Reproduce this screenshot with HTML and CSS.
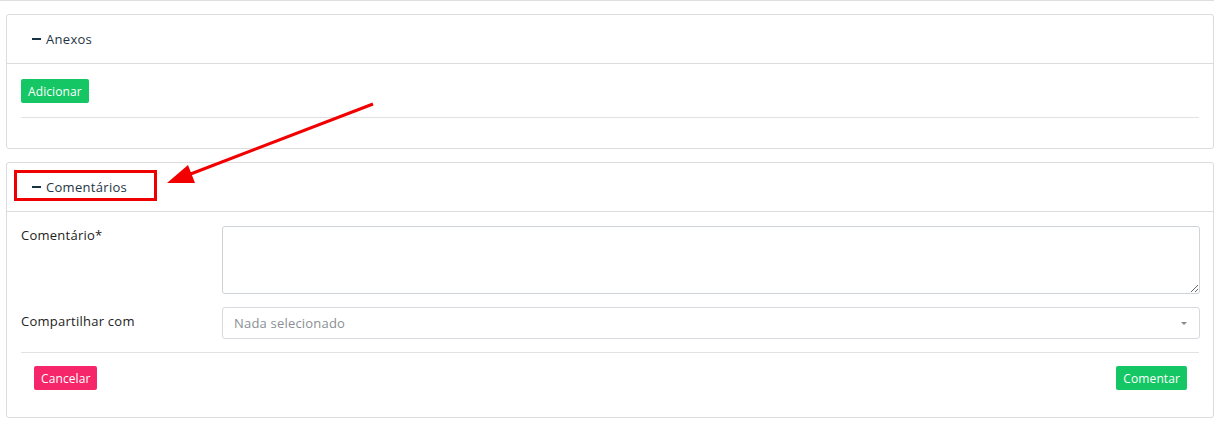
FILE: index.html
```html
<!DOCTYPE html>
<html lang="pt-BR">
<head>
<meta charset="utf-8">
<link rel="stylesheet" href="styles.css">
</head>
<body>
<div class="page">
  <div class="prev-card"></div>

  <section class="card">
    <div class="card-header"><span class="minus"></span><span class="title">Anexos</span></div>
    <div class="card-body">
      <button class="btn btn-green">Adicionar</button>
      <hr class="sep">
    </div>
  </section>

  <section class="card card-comments">
    <div class="card-header"><span class="minus"></span><span class="title">Comentários</span></div>
    <div class="card-body">
      <div class="form-row">
        <label class="label">Comentário*</label>
        <textarea class="textarea"></textarea>
      </div>
      <div class="form-row">
        <label class="label">Compartilhar com</label>
        <div class="select"><span class="placeholder">Nada selecionado</span><span class="caret"></span></div>
      </div>
      <hr class="sep sep-form">
      <div class="actions">
        <button class="btn btn-pink">Cancelar</button>
        <button class="btn btn-green">Comentar</button>
      </div>
    </div>
    <div class="highlight"></div>
  </section>

  <svg class="arrow" width="1227" height="438" viewBox="0 0 1227 438">
    <line x1="373" y1="104" x2="188" y2="175" stroke="#f20000" stroke-width="3"/>
    <polygon points="167,183 188,165 195,183" fill="#f20000"/>
  </svg>
</div>
</body>
</html>
```
FILE: styles.css
```css
* { box-sizing: border-box; }
body {
  margin: 0;
  background: #fff;
  font-family: "Open Sans", "Liberation Sans", sans-serif;
  font-size: 13px;
  color: #27323b;
}
.page {
  position: relative;
  padding: 0 13px 0 6px;
  width: 1227px;
  height: 438px;
  overflow: hidden;
}
.prev-card {
  height: 1px;
  margin-left: -6px;
  border-bottom: 1px solid #dedede;
}
.card {
  position: relative;
  margin-top: 13px;
  border: 1px solid #dcdcdc;
  border-radius: 3px;
  background: #fff;
}
.card-header {
  height: 49px;
  display: flex;
  align-items: center;
  padding-left: 25px;
  border-bottom: 1px solid #dcdcdc;
  color: #1e3445;
}
.minus {
  width: 9px;
  height: 2px;
  background: #173446;
  margin-right: 5px;
  margin-top: 0;
}
.title { font-size: 13px; letter-spacing: 0.3px; }
.card-body {
  padding: 15px 14px 0 14px;
}
.btn {
  font-family: inherit;
  font-size: 12px;
  letter-spacing: 0.1px;
  color: #fff;
  border: none;
  border-radius: 2px;
  height: 24px;
  padding: 0 7px;
  cursor: pointer;
}
.btn-green { background: #14c664; }
.btn-pink { background: #f5276a; }
.sep {
  margin: 14px 0 0 0;
  border: 0;
  border-top: 1px solid #e2e2e2;
  height: 0;
  padding-bottom: 30px;
}
.card-comments .card-body { padding-top: 14px; }
.form-row {
  display: grid;
  grid-template-columns: 201px 978px;
  margin-bottom: 13px;
}
.label {
  padding-top: 1px;
  line-height: 16px;
  color: #222;
  letter-spacing: 0.25px;
}
.textarea {
  height: 68px;
  border: 1px solid #cfd3da;
  border-radius: 3px;
  resize: vertical;
  margin: 0;
  font-family: inherit;
}
.form-row:nth-child(2) .label { padding-top: 6px; }
.select {
  height: 32px;
  border: 1px solid #d6d9de;
  border-radius: 3px;
  display: flex;
  align-items: center;
  justify-content: space-between;
  padding: 0 12px 0 11px;
}
.placeholder { color: #8a8f94; letter-spacing: 0.2px; }
.caret {
  width: 0; height: 0;
  border-left: 3px solid transparent;
  border-right: 3px solid transparent;
  border-top: 3px solid #888;
}
.sep-form {
  margin-top: 0;
  padding-bottom: 0;
}
.actions {
  display: flex;
  justify-content: space-between;
  padding: 13px 12px 27px 13px;
}
.highlight {
  position: absolute;
  left: 7px;
  top: 7px;
  width: 143px;
  height: 31px;
  border: 3px solid #ee0000;
}
.arrow {
  position: absolute;
  left: 0;
  top: 0;
  pointer-events: none;
}
```
